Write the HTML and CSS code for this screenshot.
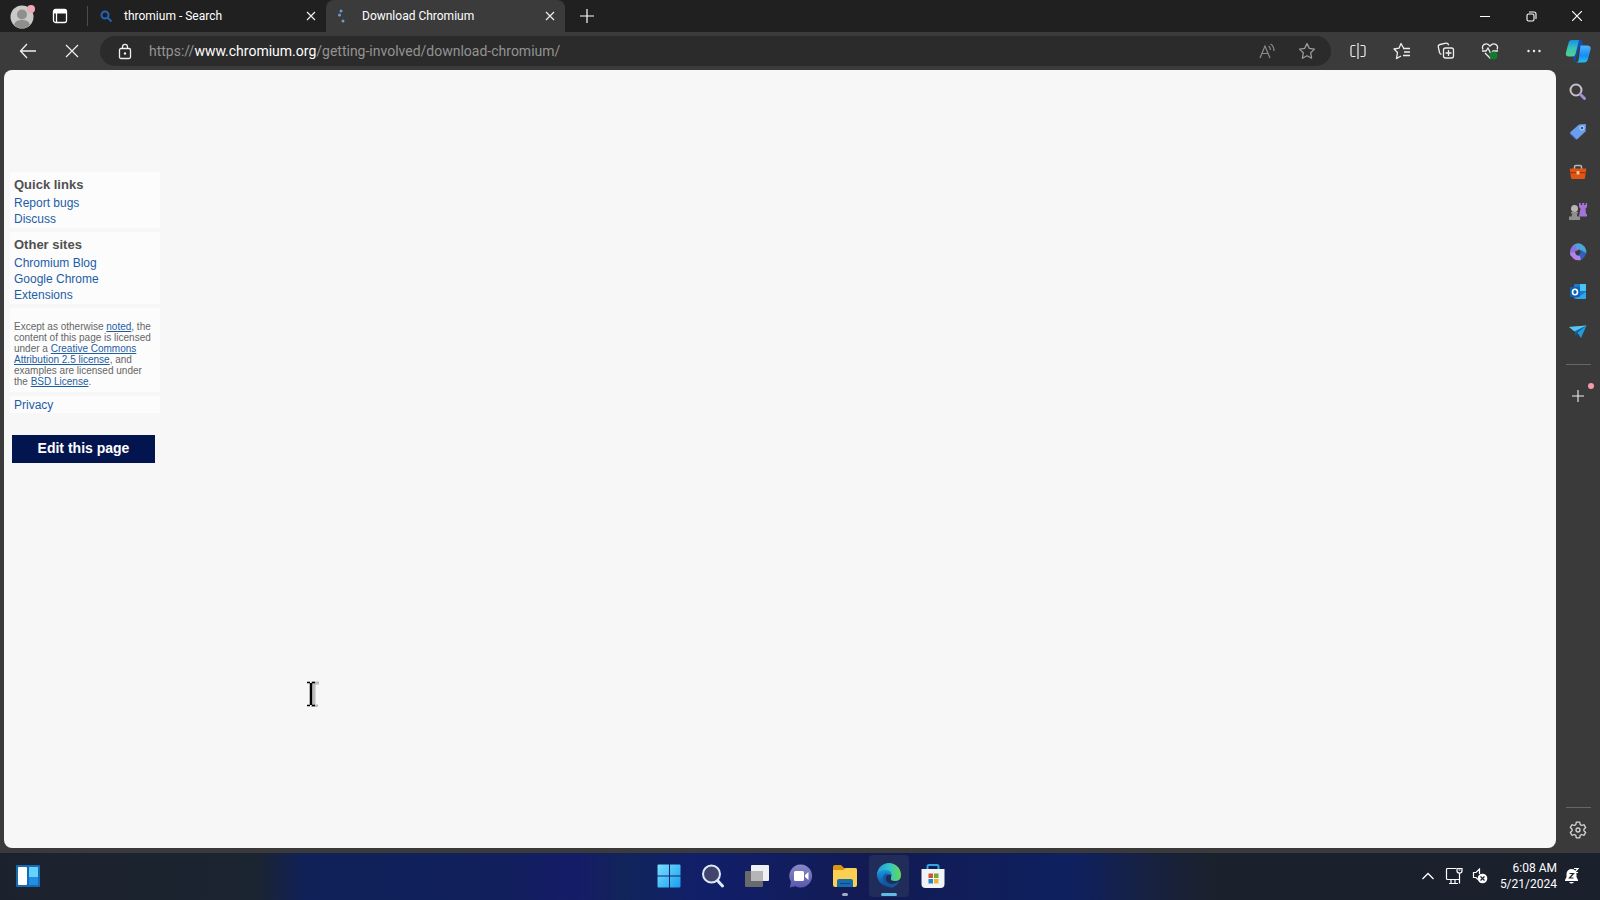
FILE: index.html
```html
<!DOCTYPE html>
<html lang="en">
<head>
<meta charset="utf-8">
<title>Download Chromium</title>
<link rel="stylesheet" href="styles.css">
</head>
<body>
<div class="screen">
  <header class="tabstrip">
    <button class="profile" aria-label="Profile">
      <svg width="26" height="26" viewBox="0 0 26 26"><circle cx="12" cy="14" r="11.500" fill="#c9c9c7"/><circle cx="12" cy="11.500" r="5" fill="#8f8f8d"/><path d="M4 22c1-4 4-5 8-5s7 1 8 5c-4 4.500-12 4.500-16 0z" fill="#8f8f8d"/><circle cx="21" cy="6" r="4" fill="#f0a9b6"/></svg>
    </button>
    <button class="workspaces" aria-label="Tab actions">
      <svg width="16" height="16" viewBox="0 0 16 16" fill="none" stroke="#fff" stroke-width="1.300"><rect x="1.500" y="1.500" width="13" height="13" rx="2"/><path d="M4.500 5v9.500"/><path d="M2 3.500h12" stroke-width="4"/></svg>
    </button>
    <span class="separator"></span>
    <div class="tab">
      <svg class="favicon" width="14" height="14" viewBox="0 0 14 14" fill="none" stroke="#2463b5" stroke-width="2"><circle cx="5" cy="6" r="3.500"/><path d="M7.500 8.500l4 4"/></svg>
      <span class="tab-title">thromium - Search</span>
      <button class="tab-close" aria-label="Close tab"><svg width="10" height="10" viewBox="0 0 10 10" stroke="#eee" stroke-width="1.200"><path d="M1 1l8 8M9 1l-8 8"/></svg></button>
    </div>
    <div class="tab active">
      <svg class="favicon" width="14" height="14" viewBox="0 0 14 14" fill="#6e9cc9"><circle cx="3" cy="2" r="1.500"/><circle cx="1.500" cy="6" r="1.500"/><circle cx="5" cy="12" r="1.500"/></svg>
      <span class="tab-title">Download Chromium</span>
      <button class="tab-close" aria-label="Close tab"><svg width="10" height="10" viewBox="0 0 10 10" stroke="#eee" stroke-width="1.200"><path d="M1 1l8 8M9 1l-8 8"/></svg></button>
    </div>
    <button class="new-tab" aria-label="New tab"><svg width="14" height="14" viewBox="0 0 14 14" stroke="#fff" stroke-width="1.200"><path d="M0 7h14M7 0v14"/></svg></button>
    <div class="window-controls">
      <button aria-label="Minimize"><svg width="10" height="10" viewBox="0 0 10 10" stroke="#fff"><path d="M0 5.500h10"/></svg></button>
      <button aria-label="Restore"><svg width="11" height="11" viewBox="0 0 11 11" fill="none" stroke="#fff" stroke-width="1.100"><rect x="1" y="3" width="7" height="7" rx="1.500"/><path d="M3 1h5q2 0 2 2v5"/></svg></button>
      <button aria-label="Close"><svg width="10" height="10" viewBox="0 0 10 10" stroke="#fff" stroke-width="1.200"><path d="M0 0l10 10M10 0L0 10"/></svg></button>
    </div>
  </header>

  <nav class="toolbar">
    <button class="tool nav-tool" aria-label="Back"><svg width="18" height="16" viewBox="0 0 18 16" fill="none" stroke="#f0f0f0" stroke-width="1.300"><path d="M8 1L1.500 8 8 15M1.500 8H17"/></svg></button>
    <button class="tool nav-tool" aria-label="Stop"><svg width="14" height="14" viewBox="0 0 14 14" stroke="#f0f0f0" stroke-width="1.200"><path d="M1 1l12 12M13 1L1 13"/></svg></button>
    <div class="address">
      <button class="tool lock" aria-label="Site information"><svg width="14" height="17" viewBox="0 0 14 17" fill="none" stroke="#f0f0f0" stroke-width="1.300"><rect x="1.500" y="5.500" width="11" height="10" rx="1.500"/><path d="M4.500 5.500V4a2.500 2.700 0 0 1 5 0v1.500"/><circle cx="7" cy="10.500" r=".6" fill="#f0f0f0"/></svg></button>
      <div class="url" role="textbox" aria-label="Address" contenteditable="true" spellcheck="false">https://<span class="host">www.chromium.org</span>/getting-involved/download-chromium/</div>
      <button class="tool in-address" aria-label="Read aloud"><svg width="16" height="16" viewBox="0 0 16 16" fill="none" stroke="#8b8b8b" stroke-width="1.200"><path d="M1 15L6 3l5 12M3 10.500h6.500M9.500 3q2 1.500 2 4M11.500 1q3.500 2 3.500 7"/></svg></button>
      <button class="tool in-address" aria-label="Add to favorites"><svg width="18" height="18" viewBox="0 0 18 18" fill="none" stroke="#9a9a9a" stroke-width="1.300" stroke-linejoin="round"><path d="M9 1.500l2.300 4.900 5.200.7-3.800 3.700.9 5.400L9 13.700l-4.600 2.500.9-5.400L1.500 7.100l5.200-.7z"/></svg></button>
    </div>
    <button class="tool" aria-label="Split screen"><svg width="16" height="16" viewBox="0 0 16 16" fill="none" stroke="#eee" stroke-width="1.200"><path d="M8 0v16M5.500 2.500H2.500q-1.500 0-1.500 1.500v8q0 1.500 1.500 1.500h3M10.500 2.500h3q1.500 0 1.500 1.500v8q0 1.500-1.500 1.500h-3"/></svg></button>
    <button class="tool" aria-label="Favorites"><svg width="18" height="18" viewBox="0 0 18 18" fill="none" stroke="#eee" stroke-width="1.300" stroke-linejoin="round"><path d="M10.500 6L8 1.500 6 6.200 1 7l3.500 3.500-1 6L8 14M10 6.500h7M11 10h6M10 13.500h7"/></svg></button>
    <button class="tool" aria-label="Collections"><svg width="18" height="18" viewBox="0 0 18 18" fill="none" stroke="#eee" stroke-width="1.300"><path d="M4.500 12.500q-1.500-.5-2-2L1.300 5Q1 3 3 2.500l6-1.300q2-.2 2.700 2"/><rect x="6.500" y="6" width="10" height="10" rx="2"/><path d="M11.500 8v6M8.500 11h6"/></svg></button>
    <button class="tool" aria-label="Browser essentials"><svg width="18" height="18" viewBox="0 0 18 18" fill="none" stroke="#eee" stroke-width="1.300"><path d="M2 7.500C0 3 5-.5 9 4c4-4.500 9-1 7 3.500M4 11l5 5 2-2M1 9h4l2-3 3 6 2-3h5"/><circle cx="12.500" cy="13.500" r="4" fill="#107c2c" stroke="none"/></svg></button>
    <button class="tool" aria-label="Settings and more"><svg width="16" height="16" viewBox="0 0 16 16" fill="#eee"><circle cx="2.500" cy="8" r="1.200"/><circle cx="8" cy="8" r="1.200"/><circle cx="13.500" cy="8" r="1.200"/></svg></button>
    <button class="copilot" aria-label="Copilot">
      <svg width="26" height="24" viewBox="0 0 26 24"><defs><linearGradient id="cpa" x2="0" y2="1"><stop offset="0" stop-color="#1a8ee8"/><stop offset=".5" stop-color="#36c4b8"/><stop offset="1" stop-color="#52d08a"/></linearGradient><linearGradient id="cpb" x2="0" y2="1"><stop offset="0" stop-color="#4db4ff"/><stop offset=".6" stop-color="#168cf5"/><stop offset="1" stop-color="#22c2f0"/></linearGradient></defs><path d="M10 1h5q2 0 2.500 3l.8 3-4 1L10 23q-2-.500-2-5z" fill="#124fae"/><path d="M7 1h7L10.500 15q-.7 2.500-3 2.500H4q-4 0-3-4L3.500 4Q4.300 1 7 1z" fill="url(#cpa)"/><path d="M15.500 6.500H22q4.500 0 3.500 4L23 20q-1 3.500-4 3.500h-8q2 0 2.500-2z" fill="url(#cpb)"/></svg>
    </button>
  </nav>

  <div class="content">
    <main class="page">
      <aside class="site-nav">
        <section class="panel">
          <h2>Quick links</h2>
          <a href="#bugs">Report bugs</a>
          <a href="#discuss">Discuss</a>
        </section>
        <section class="panel">
          <h2>Other sites</h2>
          <a href="#blog">Chromium Blog</a>
          <a href="#chrome">Google Chrome</a>
          <a href="#extensions">Extensions</a>
        </section>
        <section class="panel license">
          <p>Except as otherwise <a href="#noted">noted</a>, the content of this page is licensed under a <a href="#cc">Creative Commons Attribution 2.5 license</a>, and examples are licensed under the <a href="#bsd">BSD License</a>.</p>
        </section>
        <section class="panel privacy"><a href="#privacy">Privacy</a></section>
        <button class="edit">Edit this page</button>
      </aside>
      <svg class="cursor" width="14" height="26" viewBox="0 0 14 26"><path d="M8 3v21M5 2h8M5 25h7" stroke="#bdbdbd" stroke-width="3"/><path d="M5 2v22M1 1.500h3M6 1.500h3M1 24.500h3M6 24.500h3" stroke="#000" stroke-width="1.500"/><path d="M5 2v22" stroke="#000" stroke-width="2.500"/></svg>
    </main>
    <aside class="sidebar">
      <button aria-label="Search"><svg width="18" height="18" viewBox="0 0 18 18" fill="none"><circle cx="7" cy="7" r="5.500" stroke="#c4c2c6" stroke-width="2"/><path d="M11.500 11.500l4 4" stroke="#a98bda" stroke-width="3" stroke-linecap="round"/></svg></button>
      <button aria-label="Shopping"><svg width="18" height="18" viewBox="0 0 18 18"><path d="M10 1.500l6-.5q1 0 1 1l-.5 6.500-8 7.500q-1 .8-2 0L1.500 11q-1-1 0-2z" fill="#6b9eeb"/><path d="M1.200 10l6.500 6.300q-.7.500-1.500-.2L1.500 11.500z" fill="#3e68c0"/><circle cx="13" cy="5" r="2" fill="#225a9d" stroke="#c4e7ff"/></svg></button>
      <button aria-label="Tools"><svg width="18" height="18" viewBox="0 0 18 18"><path d="M5.500 6V4q0-1.500 1.500-1.500h4q1.500 0 1.500 1.500v2" fill="none" stroke="#b9b9b9" stroke-width="1.500"/><path d="M1.500 5.500h15q1 0 .8 1L16 15q-.2 1-1 1H3q-.8 0-1-1L.8 6.500q-.2-1 .7-1z" fill="#e05415"/><path d="M1 9h16v1.200H1z" fill="#a93208"/><rect x="7.500" y="8" width="3" height="3.500" rx="1" fill="#fac7a4"/></svg></button>
      <button aria-label="Games"><svg width="20" height="20" viewBox="0 0 20 20"><path d="M11 1h1.700v2h1.500V1h2v2h1.500V1H19v4l-1.500 1.500L18 12h1v2.500h-8L12.500 6.500 11 5z" fill="#a873d8"/><circle cx="6.500" cy="6.500" r="3.500" fill="#b9b6b2"/><path d="M3 10h7v1.500H8.700l.8 3H12V18H1v-3.500h2.500l.8-3H3z" fill="#918f8c"/></svg></button>
      <button aria-label="Microsoft 365"><svg width="18" height="18" viewBox="0 0 18 18"><path d="M5 1.500q4-2 8 0L9.500 7 6 8.500v4L1.500 13Q-.5 6 5 1.500z" fill="#8a72dc"/><path d="M6 1.200q6-2.500 10 3Q18 8 17 11l-5-2q0-3-4.500-3z" fill="#4aa6d8"/><path d="M12 7l5 3q-1 5.500-6.500 7.500L7.500 13q4.500-1 4.500-6z" fill="#315fbd"/><path d="M1 10l5-1q.5 4 5 4l1 4Q4 19 1 10z" fill="#b184e6"/></svg></button>
      <button aria-label="Outlook"><svg width="18" height="18" viewBox="0 0 18 18"><rect x="5" y="1" width="12" height="15" rx="1" fill="#1c79ce"/><path d="M11 1h6v7h-6z" fill="#4ac3f4"/><path d="M6 16l11-7v6q0 1-1 1z" fill="#2fa6e8"/><rect x="1" y="4" width="10" height="10" rx="1" fill="#0b62b4"/><ellipse cx="6" cy="9" rx="2.500" ry="2.800" fill="none" stroke="#fff" stroke-width="1.600"/></svg></button>
      <button aria-label="Drop"><svg width="18" height="16" viewBox="0 0 18 16"><path d="M0 3l17.500-1.500L12 14 8.500 9z" fill="#219bdd"/><path d="M0 3l17.500-1.500L5.500 7.500z" fill="#59c4ed"/><path d="M5.500 7.500L17.500 1.500 7.500 9.500 7 13z" fill="#12639e"/></svg></button>
      <hr>
      <button class="add" aria-label="Customize"><svg width="12" height="12" viewBox="0 0 12 12" stroke="#eee" stroke-width="1.100"><path d="M0 6h12M6 0v12"/></svg><span class="dot"></span></button>
      <hr class="bottom-rule">
      <button aria-label="Settings"><svg width="18" height="18" viewBox="0 0 18 18" fill="none" stroke="#d5d5d5" stroke-width="1.300" stroke-linejoin="round"><path d="M7.300 1.200h3.400l.5 2.400 1.500.9 2.400-.8 1.600 2.900-1.800 1.600v1.600l1.800 1.600-1.600 2.900-2.400-.8-1.500.9-.5 2.400H7.300l-.5-2.400-1.500-.9-2.400.8-1.600-2.900 1.800-1.600V8.200L1.300 6.600l1.600-2.900 2.400.8 1.500-.9z"/><circle cx="9" cy="9" r="2"/></svg></button>
    </aside>
  </div>

  <footer class="taskbar">
    <div class="task-left">
      <button aria-label="Widgets"><svg width="24" height="24" viewBox="0 0 24 24"><rect x="0" y="1" width="24" height="22" rx="1" fill="#176bb5"/><rect x="2" y="3" width="9" height="18" rx="1" fill="#fff"/><path d="M13 3h9v10h-9z" fill="#66d2fa"/><path d="M13 13h9v8h-9z" fill="#218ee4"/></svg></button>
    </div>
    <div class="task-apps">
      <button aria-label="Start"><svg width="24" height="24" viewBox="0 0 24 24"><defs><linearGradient id="win" x2="1" y2="1"><stop offset="0" stop-color="#7be0ff"/><stop offset="1" stop-color="#169df0"/></linearGradient></defs><path d="M1.500.5H12v11H.5v-10q0-1 1-1zM13 .5h9.500q1 0 1 1v10H13zM.5 12.500H12v11H1.500q-1 0-1-1zM13 12.500h10.500v10q0 1-1 1H13z" fill="url(#win)"/></svg></button>
      <button aria-label="Search"><svg width="24" height="24" viewBox="0 0 24 24"><path d="M16 16l5.500 6" stroke="#dceafb" stroke-width="3" stroke-linecap="round"/><circle cx="10.500" cy="10" r="8.500" fill="#41456e" stroke="#dfe9f6" stroke-width="2"/></svg></button>
      <button aria-label="Task view"><svg width="26" height="24" viewBox="0 0 26 24"><rect x="7" y="1" width="18" height="16" rx="1" fill="#edf1f4"/><rect x="1" y="7" width="18" height="16" rx="1" fill="#686a6d"/><path d="M7 7h12v10H7z" fill="#b4b5b4"/></svg></button>
      <button aria-label="Chat"><svg width="24" height="24" viewBox="0 0 24 24"><defs><linearGradient id="chat" x2="0" y2="1"><stop offset="0" stop-color="#8b89c8"/><stop offset="1" stop-color="#5857ad"/></linearGradient></defs><path d="M12 .5a11.500 11.500 0 1 1-5.500 21.800L.8 23.500 2 18A11.500 11.500 0 0 1 12 .5z" fill="url(#chat)"/><rect x="5" y="7" width="10" height="10" rx="1.500" fill="#fff"/><path d="M16 11l3.500-3v8L16 13z" fill="#fff"/></svg></button>
      <button aria-label="File Explorer"><svg width="26" height="24" viewBox="0 0 26 24"><path d="M1 3q0-2 2-2h6l3 3h11q2 0 2 2v4H1z" fill="#d99715"/><path d="M1 6h10l3-2h9q2 0 2 2v15q0 2-2 2H3q-2 0-2-2z" fill="#fbcf51"/><path d="M5 23v-6q0-2 2-2h12q2 0 2 2v6z" fill="#176dac"/><path d="M8 19h10v1H8z" fill="#0c477e"/></svg><span class="running"></span></button>
      <button class="current" aria-label="Microsoft Edge"><svg width="26" height="26" viewBox="0 0 26 26"><defs><linearGradient id="eda" x2="1"><stop offset="0" stop-color="#229bdd"/><stop offset=".5" stop-color="#31c4c7"/><stop offset="1" stop-color="#65d854"/></linearGradient><linearGradient id="edb" x2="0" y2="1"><stop offset="0" stop-color="#1a96de"/><stop offset="1" stop-color="#0c4f9e"/></linearGradient></defs><path d="M1 12A12 12 0 0 1 25 12q0 6-6 6-5 0-4-3 2-7-5-7-7 0-9 5z" fill="url(#eda)"/><path d="M1 12.500Q3 7 9.500 7q6 0 6 5-5-2-6 3-.5 5 5 6 4 .6 9-2.500A12.500 12.500 0 0 1 1 12.500z" fill="url(#edb)"/><path d="M9.300 10.500q-5 5-.5 11 3 3.500 8 3 4-1.500 6.700-6-5 3.500-9.500 2.200-5.500-1.700-4.500-6.700.6-2.500 3-3.300z" fill="#10599f"/></svg><span class="running"></span></button>
      <button aria-label="Microsoft Store"><svg width="24" height="26" viewBox="0 0 24 26"><path d="M6.500 7V3.500q0-1.500 1.500-1.500h8q1.500 0 1.500 1.500V7" fill="none" stroke="#32a5df" stroke-width="2"/><path d="M.5 6h23v15q0 4-4 4h-15q-4 0-4-4z" fill="#f2f3f6"/><path d="M7.500 10.500H12V15H7.500z" fill="#d6512d"/><path d="M13 10.500h4.500V15H13z" fill="#77a634"/><path d="M7.500 16H12v4.500H7.500z" fill="#2585c4"/><path d="M13 16h4.500v4.500H13z" fill="#eab334"/></svg></button>
    </div>
    <div class="tray">
      <button aria-label="Show hidden icons"><svg width="12" height="8" viewBox="0 0 12 8" fill="none" stroke="#fff" stroke-width="1.300"><path d="M.5 7L6 1.500 11.500 7"/></svg></button>
      <button aria-label="Network"><svg width="18" height="18" viewBox="0 0 18 18" fill="none" stroke="#fff" stroke-width="1.200"><path d="M11 1.500H2.500q-1 0-1 1v9q0 1 1 1H14M6 13v3M10 13v3M4 16.500h9M14.500 6v10.500M12 1.500h5V4q0 2-2.500 2T12 4zM13.500 3h2"/></svg></button>
      <button aria-label="Volume muted"><svg width="16" height="16" viewBox="0 0 16 16" fill="none" stroke="#fff" stroke-width="1.200"><path d="M7.500 6V1L4 4.500H1.500v5H4l2 2"/><circle cx="10.500" cy="10.500" r="4.800" fill="#fff" stroke="none"/><path d="M8.500 8.500l4 4M12.500 8.500l-4 4" stroke="#1b202c"/></svg></button>
      <time class="clock" datetime="2024-05-21T06:08">6:08 AM<br>5/21/2024</time>
      <button aria-label="Notifications"><svg width="16" height="18" viewBox="0 0 16 18"><path d="M1 13l1.500-3V7a5 5 0 0 1 10 0v3l1.500 3v1H1zM5 15h5q-2.500 3-5 0z" fill="#fff"/><path d="M5.500 6.500h4l-4 4.500h4" fill="none" stroke="#1b202c" stroke-width="1.200"/><path d="M10 1.500h4L10.500 5.500H14" fill="none" stroke="#fff" stroke-width="1.200"/></svg></button>
    </div>
  </footer>
</div>
</body>
</html>
```

FILE: styles.css
```css
* {
  box-sizing: border-box;
}

body {
  margin: 0;
  background: #3b3a3a;
  color: #fff;
  font-family: Roboto, "Open Sans", sans-serif;
  font-size: 12px;
}

button {
  display: flex;
  align-items: center;
  justify-content: center;
  flex: none;
  margin: 0;
  padding: 0;
  border: 0;
  background: none;
  color: inherit;
  font: inherit;
}

svg {
  display: block;
  flex: none;
}

.screen {
  display: flex;
  flex-direction: column;
  min-height: 100vh;
}

/* Tab strip */
.tabstrip {
  display: flex;
  align-items: stretch;
  height: 32px;
  background: #202020;
}

.profile {
  width: 40px;
  padding-left: 6px;
}

.workspaces {
  width: 40px;
}

.separator {
  width: 1px;
  height: 20px;
  margin: 6px 0 0 7px;
  background: #4c4c4c;
}

.tab {
  display: flex;
  align-items: center;
  width: 238px;
  padding: 0 8px 0 12px;
}

.tab.active {
  width: 239px;
  border-radius: 8px 8px 0 0;
  background: #3b3b3b;
}

.favicon {
  margin-right: 10px;
}

.tab-title {
  flex: 1;
  line-height: 16px;
}

.tab-close {
  width: 14px;
  height: 20px;
}

.new-tab {
  width: 44px;
}

.window-controls {
  display: flex;
  margin-left: auto;
}

.window-controls button {
  width: 46px;
}

/* Toolbar */
.toolbar {
  display: flex;
  align-items: center;
  height: 38px;
  padding-left: 6px;
  background: #3b3b3b;
}

.tool {
  width: 44px;
  height: 30px;
}

.address {
  display: flex;
  align-items: center;
  flex: 1;
  height: 30px;
  margin: 0 5px 0 6px;
  border-radius: 15px;
  background: #2b2b2b;
}

.lock {
  width: 49px;
}

.url {
  flex: 1;
  color: #939393;
  font-size: 14px;
  line-height: 20px;
  white-space: nowrap;
}

.host {
  color: #fff;
}

.in-address {
  width: 40px;
}

.in-address:last-child {
  margin-right: 4px;
}

.copilot {
  width: 44px;
}

/* Web page and sidebar */
.content {
  display: flex;
  flex: 1;
  background: #3b3a3a;
}

.page {
  position: relative;
  flex: 1;
  margin: 0 0 5px 4px;
  padding: 102px 6px 0;
  border-radius: 8px;
  background: #f7f7f7;
  font-family: "Liberation Sans", Arial, sans-serif;
}

.site-nav {
  display: flex;
  flex-direction: column;
  gap: 4px;
  width: 150px;
}

.panel {
  padding: 5px 4px 1px;
  background: #fcfcfc;
  line-height: 16px;
}

.panel h2 {
  margin: 0 0 2px;
  color: #505050;
  font-size: 13px;
}

.panel a {
  display: block;
  color: #1d5ca6;
  text-decoration: none;
}

.license {
  padding: 13px 4px 5px;
  color: #666;
  font-size: 10px;
  line-height: 11px;
}

.license p {
  margin: 0;
}

.license a {
  display: inline;
  text-decoration: underline;
}

.privacy {
  padding: 1px 4px 0;
}

.edit {
  width: 143px;
  height: 28px;
  margin: 18px 0 0 2px;
  padding-bottom: 2px;
  background: #03154f;
  font-size: 14px;
  font-weight: bold;
}

.cursor {
  position: absolute;
  left: 302px;
  top: 611px;
}

.sidebar {
  display: flex;
  flex-direction: column;
  align-items: center;
  width: 44px;
  padding: 2px 0 3px;
}

.sidebar button {
  position: relative;
  width: 44px;
  height: 40px;
}

.sidebar hr {
  width: 25px;
  height: 1px;
  margin: 12px 0 11px;
  border: 0;
  background: #666;
}

.sidebar .bottom-rule {
  margin: auto 0 2px;
}

.dot {
  position: absolute;
  top: 7px;
  right: 6px;
  width: 6px;
  height: 6px;
  border-radius: 50%;
  background: #f59aa9;
}

/* Taskbar */
.taskbar {
  display: grid;
  grid-template-columns: 1fr auto 1fr;
  align-items: center;
  height: 47px;
  padding: 0 0 2px 2px;
  background: linear-gradient(90deg, #1c222d 0, #1b2431 16%, #102158 19%, #11205c 31%, #151c67 36%, #11245a 39%, #111f6a 44%, #121b53 54%, #0e205f 67%, #17213f 72%, #1b212c 76%, #1a202c 100%);
}

.task-left {
  padding-left: 14px;
}

.task-apps {
  display: flex;
  gap: 4px;
}

.task-apps button {
  position: relative;
  width: 40px;
  height: 42px;
  border-radius: 4px;
}

.task-apps .current {
  background: #222c5a;
}

.running {
  position: absolute;
  bottom: 1px;
  width: 6px;
  height: 3px;
  border-radius: 2px;
  background: #a4aac4;
}

.current .running {
  width: 16px;
  background: #62bce8;
}

.tray {
  display: flex;
  align-items: center;
  justify-content: flex-end;
  padding-right: 15px;
}

.tray button {
  width: 26px;
  height: 40px;
}

.clock {
  width: 64px;
  margin-right: 2px;
  line-height: 16px;
  text-align: right;
}
```
